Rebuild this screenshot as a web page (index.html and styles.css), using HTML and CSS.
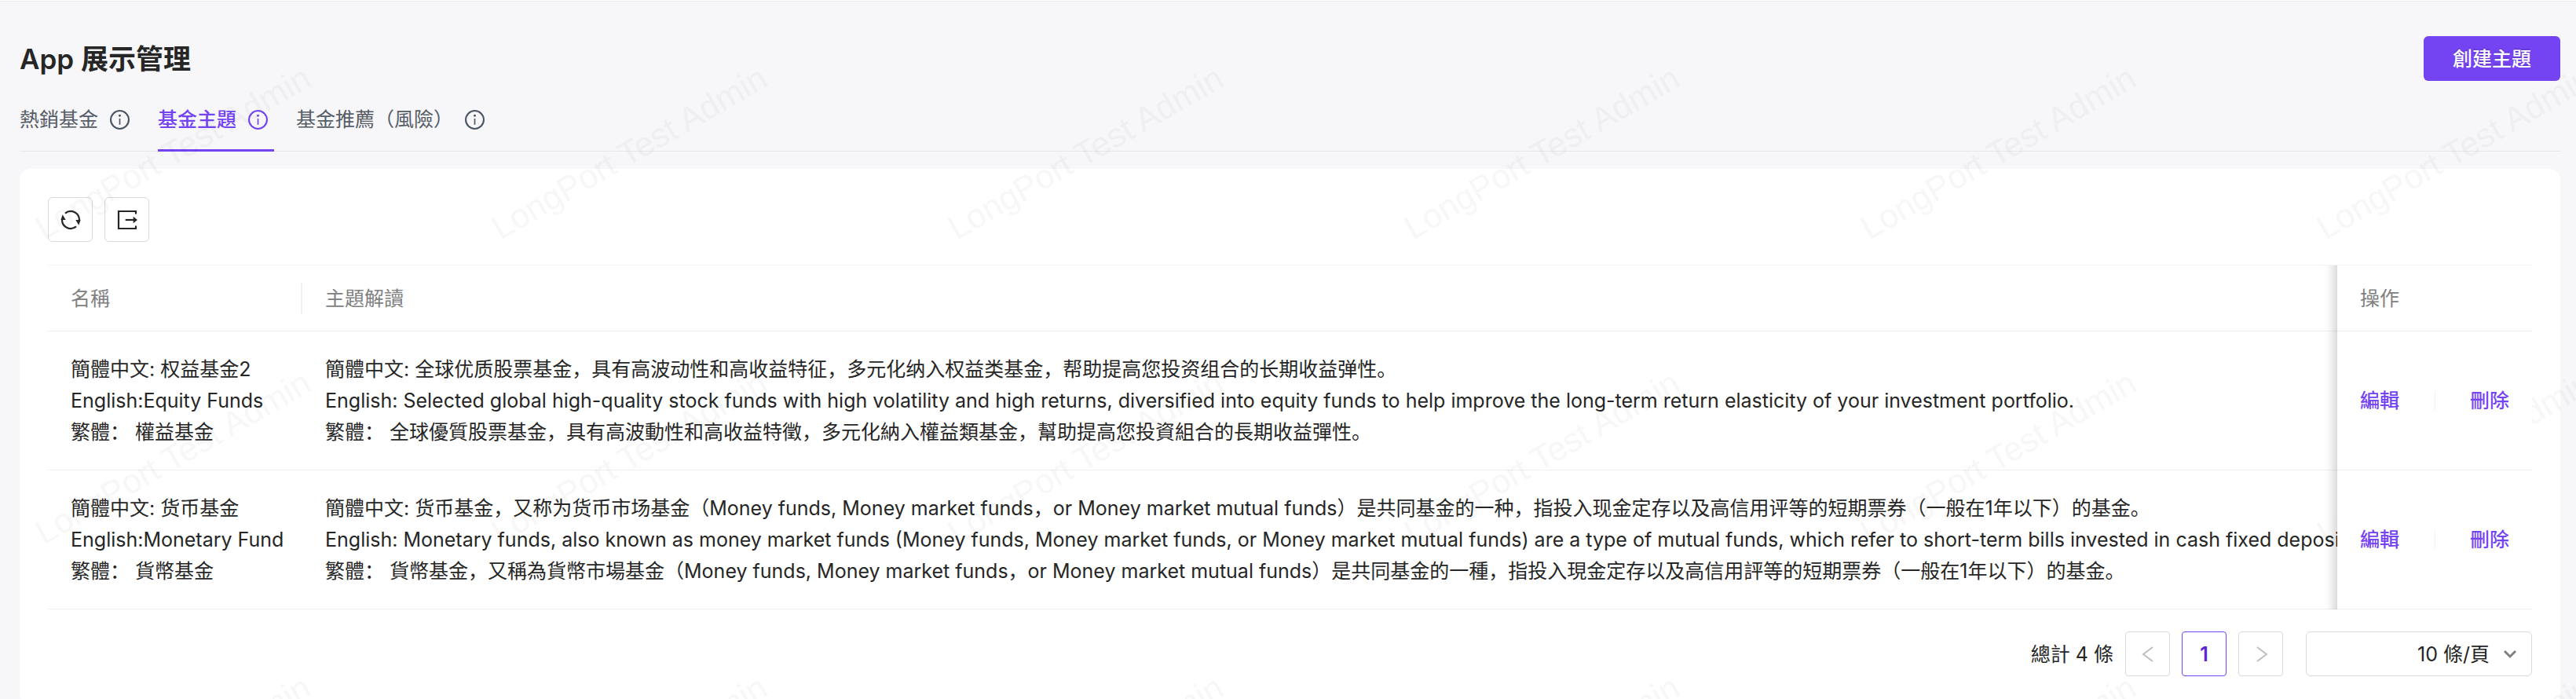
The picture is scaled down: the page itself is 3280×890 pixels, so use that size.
FILE: index.html
```html
<!DOCTYPE html>
<html lang="zh-CN">
<head>
<meta charset="utf-8">
<meta name="viewport" content="width=device-width, initial-scale=1">
<title>App 展示管理</title>
<link rel="stylesheet" href="styles.css">
</head>
<body>
<svg class="sprite" aria-hidden="true">
  <symbol id="icon-info" viewBox="0 0 24 24">
    <circle cx="12" cy="12" r="11" fill="none" stroke="currentColor" stroke-width="2"/>
    <circle cx="12" cy="7" r="1.4" fill="currentColor"/>
    <path d="M12 10.5v7.5" fill="none" stroke="currentColor" stroke-width="1.6"/>
  </symbol>
</svg>
<div class="app">
  <header class="page-header">
    <h1 class="page-title">App 展示管理</h1>
    <button class="btn-primary" type="button">創建主題</button>
  </header>
  <nav class="tabs">
    <a class="tab" href="#hot">熱銷基金<svg class="tab-icon"><use href="#icon-info"/></svg></a>
    <a class="tab tab-active" href="#theme" aria-current="page">基金主題<svg class="tab-icon"><use href="#icon-info"/></svg></a>
    <a class="tab" href="#recommend">基金推薦（風險）<svg class="tab-icon"><use href="#icon-info"/></svg></a>
  </nav>
  <main class="card">
    <div class="toolbar">
      <button class="btn-icon" type="button" aria-label="刷新">
        <svg viewBox="0 0 28 28" width="28" height="28" fill="none" stroke="currentColor" stroke-width="2.2">
          <path d="M7 5.600A11 11 0 0 1 25 14"/><path d="M21 22.400A11 11 0 0 1 3 14"/>
          <path d="M24.300 20.700L20.300 14h6.300z" fill="currentColor" stroke="none"/>
          <path d="M3.700 7.300L7.700 14h-6.300z" fill="currentColor" stroke="none"/>
        </svg>
      </button>
      <button class="btn-icon" type="button" aria-label="匯出">
        <svg viewBox="0 0 28 28" width="28" height="28" fill="none" stroke="currentColor" stroke-width="2.2">
          <path d="M25 6.500V3H3v22h22v-3.500"/><path d="M11.700 14H23"/>
          <path d="M21.700 9.800L27 14l-5.300 4.200z" fill="currentColor" stroke="none"/>
        </svg>
      </button>
    </div>
    <div class="table-wrap">
      <table class="table">
        <thead>
          <tr><th class="col-name" scope="col"><span class="th-label">名稱</span></th><th scope="col">主題解讀</th><th class="col-action" scope="col">操作</th></tr>
        </thead>
        <tbody>
          <tr>
            <td>簡體中文: 权益基金2<br>English:Equity Funds<br>繁體： 權益基金</td>
            <td class="cell-desc">簡體中文: 全球优质股票基金，具有高波动性和高收益特征，多元化纳入权益类基金，帮助提高您投资组合的长期收益弹性。<br>English: Selected global high-quality stock funds with high volatility and high returns, diversified into equity funds to help improve the long-term return elasticity of your investment portfolio.<br>繁體： 全球優質股票基金，具有高波動性和高收益特徵，多元化納入權益類基金，幫助提高您投資組合的長期收益彈性。</td>
            <td class="col-action"><div class="actions"><a href="#edit">編輯</a><span class="divider"></span><a href="#delete">刪除</a></div></td>
          </tr>
          <tr>
            <td>簡體中文: 货币基金<br>English:Monetary Fund<br>繁體： 貨幣基金</td>
            <td class="cell-desc">簡體中文: 货币基金，又称为货币市场基金（Money funds, Money market funds，or Money market mutual funds）是共同基金的一种，指投入现金定存以及高信用评等的短期票券（一般在1年以下）的基金。<br>English: Monetary funds, also known as money market funds (Money funds, Money market funds, or Money market mutual funds) are a type of mutual funds, which refer to short-term bills invested in cash fixed deposits and<br>繁體： 貨幣基金，又稱為貨幣市場基金（Money funds, Money market funds，or Money market mutual funds）是共同基金的一種，指投入現金定存以及高信用評等的短期票券（一般在1年以下）的基金。</td>
            <td class="col-action"><div class="actions"><a href="#edit">編輯</a><span class="divider"></span><a href="#delete">刪除</a></div></td>
          </tr>
        </tbody>
      </table>
    </div>
    <div class="pagination">
      <span class="total">總計 4 條</span>
      <button class="page-btn" type="button" disabled aria-label="上一頁"><svg viewBox="0 0 20 20" width="20" height="20"><path d="M16 1L4 10l12 9"/></svg></button>
      <button class="page-btn page-current" type="button" aria-current="page">1</button>
      <button class="page-btn" type="button" disabled aria-label="下一頁"><svg viewBox="0 0 20 20" width="20" height="20"><path d="M5 1l12 9-12 9"/></svg></button>
      <div class="size-picker">
        <select class="size-select" aria-label="每頁條數"><option>10 條/頁</option></select>
        <svg class="size-arrow" viewBox="0 0 18 12" width="18" height="12"><path d="M2 2l7 7 7-7"/></svg>
      </div>
    </div>
  </main>
  <svg class="watermark" aria-hidden="true">
    <defs>
      <pattern id="wm" width="581" height="388" patternUnits="userSpaceOnUse">
        <text class="watermark-text" x="56" y="305" transform="rotate(-30 56 305)">LongPort Test Admin</text>
      </pattern>
    </defs>
    <rect width="100%" height="100%" fill="url(#wm)"/>
  </svg>
</div>
</body>
</html>
```
FILE: styles.css
```css
* { box-sizing: border-box; }

body {
  margin: 0;
  background: #f7f7fa;
  color: #262626;
  font: 25px/40px Inter, "Noto Sans CJK SC", sans-serif;
}

a { color: inherit; text-decoration: none; }
button, select { font: inherit; color: inherit; }

.sprite { position: absolute; width: 0; height: 0; }

.app {
  position: relative;
  height: 100vh;
  overflow: hidden;
  padding: 0 20px 0 25px;
  border-top: 1px solid #fff;
  box-shadow: inset 0 1px #ebebee;
}

.page-header {
  display: flex;
  justify-content: space-between;
  align-items: center;
  padding-top: 45px;
}

.page-title { margin: 0; font-size: 35px; font-weight: 600; line-height: 56px; }

.btn-primary {
  height: 57px;
  padding: 0 37px;
  border: 0;
  border-radius: 6px;
  background: #7443f2;
  color: #fff;
  font-weight: 500;
  text-shadow: 0 -2px 0 rgba(0, 0, 0, .12);
}

.tabs {
  display: flex;
  gap: 28px;
  border-bottom: 1px solid #e6e6e9;
  margin-bottom: 22px;
  color: #555c66;
}

.tab {
  display: flex;
  align-items: center;
  height: 90px;
  padding: 8px 8px 0 0;
  margin-bottom: -1px;
}

.tab-icon { width: 25px; height: 25px; margin-left: 15px; color: #4b5563; }
.tab-active { color: #7443f2; font-weight: 500; box-shadow: inset 0 -3px #7443f2; }
.tab-active .tab-icon { color: inherit; }

.card {
  background: #fff;
  border-radius: 14px;
  padding: 36px;
}

.toolbar { display: flex; gap: 15px; margin-bottom: 29px; }

.btn-icon {
  display: flex;
  align-items: center;
  justify-content: center;
  width: 57px;
  height: 57px;
  padding: 0;
  border: 1px solid #d9d9d9;
  border-radius: 6px;
  background: #fff;
}

.table-wrap { overflow: hidden; border-top: 1px solid #f3f3f3; }

.table { width: 100%; table-layout: fixed; border-collapse: separate; border-spacing: 0; white-space: nowrap; }

.table th,
.table td { padding: 28px 29px; border-bottom: 1px solid #f0f0f0; text-align: left; }

.table th { height: 84px; padding: 0 29px; color: #808080; font-weight: 400; }

.table .cell-desc { padding-right: 0; overflow: hidden; }

.table .col-name { width: 324px; padding-right: 0; }
.th-label { display: block; border-right: 2px solid #f0f0f0; }

.table .col-action {
  position: sticky;
  right: 0;
  z-index: 3;
  width: 248px;
  background: #fff;
}

.col-action::before {
  content: "";
  position: absolute;
  top: 0;
  bottom: -1px;
  right: 100%;
  width: 54px;
  box-shadow: inset -18px 0 14px -14px rgba(0, 0, 0, .2);
  pointer-events: none;
}

.actions { display: flex; align-items: center; justify-content: space-between; color: #7443f2; font-weight: 500; }
.divider { width: 1px; height: 23px; background: #f0f0f0; }

.pagination { display: flex; justify-content: flex-end; align-items: center; gap: 15px; margin-top: 28px; }

.page-btn {
  display: flex;
  align-items: center;
  justify-content: center;
  width: 57px;
  height: 57px;
  padding: 0;
  border: 1px solid #d9d9d9;
  border-radius: 4px;
  background: #fff;
}

.page-btn path { fill: none; stroke: #bfbfbf; stroke-width: 2; }
.page-current { border-color: #7443f2; color: #5b25cf; font-weight: 600; }

.size-picker { position: relative; margin-left: 14px; }

.size-select {
  display: block;
  width: 288px;
  height: 57px;
  padding: 0 53px 0 20px;
  border: 1px solid #d9d9d9;
  border-radius: 6px;
  background: #fff;
  appearance: none;
  text-align: right;
  text-align-last: right;
}

.size-arrow { position: absolute; right: 19px; top: 23px; pointer-events: none; }
.size-arrow path { fill: none; stroke: #808080; stroke-width: 3; }

.watermark { position: absolute; inset: 0; z-index: 2; width: 100%; height: 100%; pointer-events: none; }
.watermark-text { font: 43px "Liberation Sans", Arial, sans-serif; fill: rgba(0, 0, 0, .03); }
```
